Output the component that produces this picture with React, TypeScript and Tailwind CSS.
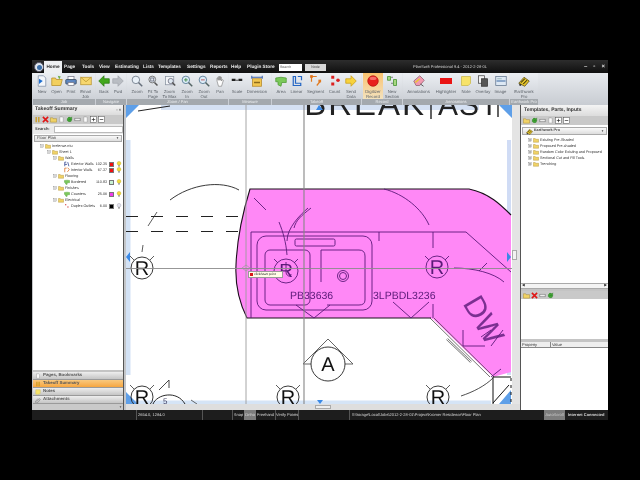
import React from "react";

const icons: Record<string, React.ReactNode> = {
  doc: (<><path d="M3 1h7l3 3v11H3z" fill="#f4f7fb" stroke="#7d8ea5" /><path d="M4 5l5 3-5 4z" fill="#1f6fd0" /></>),
  folder: (<><path d="M1 4h5l1 2h8l-2 8H1z" fill="#f2cf5e" stroke="#b58f26" /><path d="M9 1l4 1-2 4z" fill="#6fb04a" /></>),
  print: (<><rect x="4" y="2" width="8" height="5" fill="#fff" stroke="#778" /><rect x="1" y="6" width="14" height="6" rx="1" fill="#5d86c0" stroke="#345" /><rect x="4" y="10" width="8" height="4" fill="#fff" stroke="#778" /></>),
  mail: (<><rect x="1" y="3" width="14" height="10" fill="#f7d76f" stroke="#b9952f" /><path d="M1 3l7 6 7-6" fill="none" stroke="#b9952f" /></>),
  back: <path d="M1 8l7-7v4h7v6H8v4z" fill="#43a81d" stroke="#2a7a10" />,
  fwd: <path d="M15 8L8 1v4H1v6h7v4z" fill="#b9bdc3" stroke="#a3a7ad" />,
  zoom: (<><circle cx="6.5" cy="6.5" r="5" fill="#e9f1f8" stroke="#7b8794" strokeWidth="1.3" /><path d="M10 10l5 5" stroke="#66707c" strokeWidth="2" /></>),
  fit: (<><circle cx="7" cy="6" r="4.5" fill="#dfe8ef" stroke="#777" strokeWidth="1.3" /><path d="M10 10l4 4" stroke="#555" strokeWidth="2" /><rect x="5" y="4" width="4" height="4" fill="none" stroke="#667" /></>),
  max: (<><rect x="2" y="2" width="11" height="11" fill="#f3f5f8" stroke="#8892a0" /><circle cx="9" cy="8" r="3.5" fill="#dde7f0" stroke="#667" /><path d="M11 10l4 4" stroke="#555" strokeWidth="2" /></>),
  zin: (<><circle cx="6.5" cy="6.5" r="5" fill="#dcecf8" stroke="#64849c" strokeWidth="1.3" /><path d="M4 6.5h5M6.5 4v5" stroke="#2d7d2d" /><path d="M10 10l5 5" stroke="#566" strokeWidth="2" /></>),
  zout: (<><circle cx="6.5" cy="6.5" r="5" fill="#dcecf8" stroke="#64849c" strokeWidth="1.3" /><path d="M4 6.5h5" stroke="#b03030" /><path d="M10 10l5 5" stroke="#566" strokeWidth="2" /></>),
  hand: <path d="M4 8V4h1.5v3V2.5H7V7V2h1.5v5V3H10v5l1-2 1.5 1L10 15H6z" fill="#fdfdfd" stroke="#777" strokeWidth=".8" />,
  scale: (<><rect x="1" y="5" width="5" height="3" fill="#222" /><rect x="10" y="5" width="5" height="3" fill="#222" /><path d="M6 7h4" stroke="#222" /></>),
  dim: (<><rect x="2" y="5" width="12" height="10" fill="#f3c74f" stroke="#b3872a" /><rect x="4" y="9" width="8" height="2" fill="#8c6a1c" /><path d="M1 1v4M15 1v4M1 3h14" stroke="#2a55a8" strokeWidth="1.2" /></>),
  area: <path d="M1 4l7-1 7 1v6l-6 0-1 5-4-2V9H1z" fill="#7bc95a" stroke="#4e9a34" />,
  linear: <path d="M3 2h3v9h7v3H3zM9 2h5v5" fill="none" stroke="#2566c4" strokeWidth="1.6" />,
  segment: (<g fill="none" stroke="#e07a1f" strokeWidth="1.6"><path d="M2 2h7M2 2v7M14 8l-5 6" /><rect x="1" y="1" width="2" height="2" fill="#d33" /><rect x="12" y="7" width="2" height="2" fill="#d33" /></g>),
  count: (<g fill="#dc1f1f"><rect x="3" y="1" width="4" height="4" /><circle cx="12" cy="7" r="2.4" /><rect x="3" y="10" width="4" height="4" /></g>),
  send: <path d="M1 5h7V1l7 7-7 7v-4H1z" fill="#f7d23d" stroke="#c99d18" />,
  record: (<><circle cx="8" cy="8" r="7" fill="#e8201d" stroke="#b41612" /><ellipse cx="8" cy="4.5" rx="4.5" ry="2.3" fill="#f76d68" /></>),
  section: (<><path d="M2 2h4v5H2zM10 6h4v8h-4z" fill="#a6d77f" stroke="#3d8d2a" /><path d="M7 3h2M7 11h2" stroke="#333" /></>),
  annot: (<><path d="M1 8l8-7 6 6-6 7H4z" fill="#f29ab0" stroke="#8d6070" /><path d="M3 10l6-5" stroke="#e8c92e" strokeWidth="2" /><path d="M10 12l4 3" stroke="#333" /></>),
  high: <rect x="0" y="4" width="16" height="8" fill="#ea1414" />,
  note: <path d="M2 2h12v9l-3 3H2z" fill="#f7e36a" stroke="#c9b84a" />,
  overlay: (<><rect x="2" y="1" width="8" height="10" fill="#f4f4f4" stroke="#444" /><rect x="6" y="5" width="8" height="10" fill="#555" stroke="#333" /></>),
  image: (<><rect x="1" y="2" width="14" height="12" fill="#dde8f4" stroke="#60748c" /><path d="M2 8h12" stroke="#6f92bc" strokeWidth="2" /><path d="M3 5h6" stroke="#8aa" /></>),
  earth: (<><path d="M1 11l7-8 7 5-6 7z" fill="#e7c52b" stroke="#55480c" /><path d="M4 10l5-5M7 12l5-5" stroke="#33300c" strokeWidth="1.4" /><circle cx="3" cy="13" r="1.5" fill="#333" /></>),
  x: <path d="M2 2l12 12M14 2L2 14" stroke="#e01717" strokeWidth="3.6" />,
  pause: <path d="M5 2v12M11 2v12" stroke="#c99a1b" strokeWidth="3" />,
  sfolder: <path d="M1 4h5l1 2h8v8H1z" fill="#f0d266" stroke="#a2832a" />,
  refresh: <path d="M13 8a5 5 0 1 1-2-4l2-2v6H7l2-2" fill="#3fa534" stroke="#2b7d22" />,
  bar: <rect x="2" y="5" width="12" height="6" fill="#eee" stroke="#555" />,
  page: <path d="M4 2h6l2 2v10H4z" fill="#fafafa" stroke="#888" />,
  plus: (<><rect x="1.5" y="1.5" width="13" height="13" fill="#fff" stroke="#444" /><path d="M4 8h8M8 4v8" stroke="#222" strokeWidth="1.5" /></>),
  minus: (<><rect x="1.5" y="1.5" width="13" height="13" fill="#fff" stroke="#444" /><path d="M4 8h8" stroke="#222" strokeWidth="1.5" /></>),
  bulb: (<><circle cx="8" cy="6" r="5" fill="#f2dc3c" stroke="#b8a21a" /><rect x="6" y="11" width="4" height="4" fill="#888" /></>),
  bulbOff: (<><circle cx="8" cy="6" r="5" fill="#e5e5ee" stroke="#9a9aa8" /><rect x="6" y="11" width="4" height="4" fill="#888" /></>),
  tick: <path d="M2 14V3M2 3h4M2 9h6M10 3l3 11" stroke="#2a3f8c" strokeWidth="2" fill="none" />,
  orange: <path d="M2 14V3h5M10 2l4 5-5 6" stroke="#d9691c" strokeWidth="2" fill="none" />,
  red: <path d="M3 3h3v3H3zM9 9h3v3H9z" fill="#c81818" />,
  clip: <path d="M5 12l6-7a2 2 0 0 1 3 2l-7 8a3 3 0 0 1-5-4l6-7" fill="none" stroke="#666" strokeWidth="1.3" />,
};

function Icon({ k, s = 15 }: { k: string; s?: number }) {
  return (
    <svg width={s} height={s} viewBox="0 0 16 16" className="shrink-0">
      {icons[k]}
    </svg>
  );
}

function Btn({ w, k, l, active }: { w: string; k: string; l: React.ReactNode; active?: boolean }) {
  return (
    <div className={`${w} flex flex-col items-center pt-[2px] h-full ${active ? "bg-gradient-to-b from-[#f9c26e] to-[#f3e2bd]" : ""}`}>
      <Icon k={k} s={12} />
      <div className="mt-[2px] text-center text-[4.300px] leading-[5px] text-[#5c6269] whitespace-nowrap">{l}</div>
    </div>
  );
}

function Group({ w, label, pl, children }: { w: string; label: string; pl: string; children: React.ReactNode }) {
  return (
    <div className={`${w} shrink-0 flex flex-col h-full mr-[1px]`}>
      <div className={`flex flex-1 min-h-0 ${pl} bg-gradient-to-b from-[#eceff3] to-[#cdd1d7]`}>{children}</div>
      <div className="h-[6px] bg-[#a4a9ae] text-center text-[4px] leading-[6px] text-[#eceef0] whitespace-nowrap overflow-hidden">{label}</div>
    </div>
  );
}

function Tree({ pl, k, t, v, c, off, exp }: { pl: string; k: string; t: string; v?: string; c?: string; off?: boolean; exp?: string }) {
  return (
    <div className={`flex items-center h-[6px] ${pl} text-[3.700px] leading-[6px] text-[#333]`}>
      {exp && <span className="mr-[1px]"><Icon k={exp} s={4} /></span>}
      <Icon k={k} s={6} />
      <span className="ml-[1px] whitespace-nowrap">{t}</span>
      {v && (
        <>
          <span className="ml-auto">{v}</span>
          <span className={`ml-[2px] w-[5px] h-[5px] border border-[#777] ${c}`} />
          <span className="ml-[2px] mr-[1px]"><Icon k={off ? "bulbOff" : "bulb"} s={6} /></span>
        </>
      )}
    </div>
  );
}

function SideTab({ k, t, on }: { k: string; t: string; on?: boolean }) {
  return (
    <div className={`h-[8px] flex items-center pl-[2px] gap-[2px] border-b border-[#9a9a9a] text-[4.400px] font-bold text-[#555] ${on ? "bg-gradient-to-b from-[#f9c97e] to-[#f6a63e]" : "bg-gradient-to-b from-[#eeeeee] to-[#c5c5c5]"}`}>
      <Icon k={k} s={6} />
      {t}
    </div>
  );
}

function Rsym({ x, y }: { x: number; y: number }) {
  return (
    <g>
      <circle cx={x} cy={y} r={11} fill="none" stroke="#222" strokeWidth="0.9" />
      <path d={`M${x - 12} ${y - 12}l4 4M${x + 12} ${y - 12}l-4 4`} stroke="#333" strokeWidth="0.8" />
      <text x={x} y={y + 7} textAnchor="middle" fontSize="20" fontFamily="Liberation Sans" fill="#111">R</text>
    </g>
  );
}

function Drawing() {
  const purple = "#5b1a78";
  return (
    <svg viewBox="125 105 386 299" className="w-[386px] h-full block bg-white">
      <rect x="160" y="105" width="318" height="5" fill="#d5e1f3" />
      <rect x="125" y="140" width="4.5" height="235" fill="#d3e2f5" />
      <rect x="506" y="140" width="4" height="235" fill="#d0dcf5" />
      <rect x="130" y="400.5" width="360" height="3.5" fill="#d5e4f6" />
      <text x="425" y="115" textAnchor="end" fontSize="33" fontFamily="Liberation Sans" fill="#222" letterSpacing="2">BREAK</text>
      <text x="437" y="115" fontSize="30" fontFamily="Liberation Sans" fill="#222" letterSpacing="1">AST</text>
      <path d="M430 105V119M497 105V117" stroke="#111" strokeWidth="1.300" />
      <path d="M125 105h13l-13 13zM498 105h13v13zM125 392l12 12h-12zM498 404l12-14v14z" fill="#5e9fe8" />

      <path d="M137 111l32-5" stroke="#222" fill="none" />
      <path d="M169 200C190 184 220 180 238 190" fill="none" stroke="#222" strokeWidth="0.9" />
      <path d="M125 216.500H238M125 231.500H238" stroke="#222" strokeWidth="1" strokeDasharray="12 13" />
      <path d="M147 226l9-14M141 252l1-7" stroke="#333" strokeWidth="0.8" />

      <path d="M249 189H468C488 193 500 205 510 215V372L492 377L430 318H246C238 302 234 285 235 265C236 240 240 218 249 189Z" fill="#ff88f6" />
      <path d="M510 215C500 205 488 193 468 189H249C240 218 236 240 235 265C234 285 238 302 246 318H430" fill="none" stroke="#1a101a" strokeWidth="1.1" />
      <path d="M431 320L491 378" fill="none" stroke="#fff" strokeWidth="3" />
      <path d="M429 318L489 377M433 318L493 377" fill="none" stroke="#333" strokeWidth="0.7" />
      <path d="M446 339l24 23" fill="none" stroke="#777" strokeWidth="2.400" />
      <path d="M446 339l24 23" fill="none" stroke="#fff" strokeWidth="1" />

      <g fill="none" stroke={purple} strokeWidth="0.9">
        <path d="M250 232H465L510 272" />
        <path d="M250 232V318" />
        <rect x="256" y="236" width="115" height="74" rx="9" />
        <rect x="264" y="250" width="45" height="55" rx="5" />
        <path d="M320 282V250H358Q364 250 364 256V300Q364 305 358 305H326" />
        <rect x="294" y="239" width="40" height="7" rx="1.500" />
        <circle cx="342" cy="276" r="5.500" />
        <circle cx="342" cy="276" r="3.500" />
        <path d="M278 222c4 10 7 20 8 33M307 208c-8 7-21 20-21 33M310 208c-10 8-15 12-17 20" />
        <path d="M253 198l12 12" />
        <path d="M378 232v9M432 232v16" />
        <path d="M383 189c20 5 38 20 45 36" />
        <path d="M295 305l18 13 16-13M392 302l18 16 18-16M432 318v-14" />
        <path d="M486 263l-8 8M462 330v16h22M480 337l10-7M490 346l12-16M490 377l10-8" />
        <circle cx="285" cy="271" r="12" />
        <circle cx="436" cy="267" r="11" />
        <path d="M273 259l4 4M297 259l-4 4M424 256l4 4M448 256l-4 4" />
        <path d="M453 268c20 0 40 5 50 14" />
        <path d="M285 262v10c0 4 5 6 5 2" />
      </g>
      <text x="285" y="277" textAnchor="middle" fontSize="19" fontFamily="Liberation Sans" fill={purple}>R</text>
      <text x="436" y="274" textAnchor="middle" fontSize="20" fontFamily="Liberation Sans" fill={purple}>R</text>
      <text x="289" y="299" fontSize="10.500" fontFamily="Liberation Sans" fill={purple}>PB33636</text>
      <text x="372" y="299" fontSize="10.500" fontFamily="Liberation Sans" fill={purple}>3LPBDL3236</text>
      <text x="462" y="322" fontSize="30" fontFamily="Liberation Sans" fill={purple} opacity="0.8" transform="rotate(60 478 312)">DW</text>

      <path d="M492 377V404M492 377H510M492 403l16-18" fill="none" stroke="#111" strokeWidth="1" />
      <path d="M510 378v26" stroke="#111" strokeWidth="1" strokeDasharray="3 4" />
      <path d="M460 396C472 392 484 386 492 378" fill="none" stroke="#222" strokeWidth="0.8" />

      <Rsym x={141} y={268} />
      <Rsym x={141} y={397} />
      <Rsym x={287} y={397} />
      <Rsym x={437} y={397} />
      <path d="M158 390l10-10 v8" fill="none" stroke="#333" strokeWidth="0.9" />
      <path d="M152 404c4-10 24-14 32 0" fill="none" stroke="#111" strokeWidth="0.9" />
      <path d="M190 400l6 4" fill="none" stroke="#444" strokeWidth="0.8" />
      <text x="162" y="404" fontSize="8" fill="#446" fontFamily="Liberation Sans">5</text>

      <path d="M302 364l25-25 25 25h-9M302 364h9" fill="none" stroke="#555" strokeWidth="0.9" />
      <circle cx="327" cy="364" r="17" fill="#fff" stroke="#222" strokeWidth="0.9" />
      <text x="327" y="371" textAnchor="middle" fontSize="20" fontFamily="Liberation Sans" fill="#111">A</text>

      <path d="M245 105V404" stroke="#9c9c9c" strokeWidth="0.9" />
      <path d="M303 105V404" stroke="#868686" strokeWidth="1.100" />
      <path d="M125 268.500H511" stroke="#8b8b8b" strokeWidth="0.9" />

      <path d="M129 252v10l-4-5zM506 252v10l4-5zM318 105l-3 5h7zM316 400h6l-3 4z" fill="#3a89e6" />
      <path d="M241 268l4-3 4 3-4 3z" fill="none" stroke="#999" strokeWidth="0.7" />
    </svg>
  );
}

export default function App() {
  return (
    <div className="w-[640px] h-[480px] bg-black pt-[60px] pl-[32px] overflow-hidden blur-[0.35px] [text-rendering:geometricPrecision] [font-family:'Liberation_Sans',Arial,sans-serif]">
      <div className="w-[576px] h-[360px] flex flex-col bg-[#c4c6c9]">
        {/* Menu row */}
        <div className="h-[13px] shrink-0 bg-gradient-to-b from-[#2d2d2d] to-[#101010] flex items-end text-[4.700px] leading-[10px] font-bold text-[#e6e6e6]">
          <div className="w-[10px] h-[10px] ml-[2px] mb-[1px] rounded-full bg-[#dfe6ee] border border-[#556] flex items-center justify-center shrink-0">
            <div className="w-[5px] h-[5px] rounded-full bg-[#3b6ea8]" />
          </div>
          <div className="w-[18px] h-[12px] bg-[#eef0f2] text-[#333] text-center leading-[12px]">Home</div>
          <div className="flex h-[12px] items-center pl-[2px]">
            <span className="w-[18px]">Page</span>
            <span className="w-[17px]">Tools</span>
            <span className="w-[16px]">View</span>
            <span className="w-[28px]">Estimating</span>
            <span className="w-[15px]">Lists</span>
            <span className="w-[29px]">Templates</span>
            <span className="w-[23px]">Settings</span>
            <span className="w-[21px]">Reports</span>
            <span className="w-[16px]">Help</span>
            <span className="w-[32px] whitespace-nowrap">Plugin Store</span>
            <span className="w-[23px] h-[7px] bg-white text-[#555] text-[3.500px] leading-[7px] font-normal pl-[1px]">Search</span>
            <span className="ml-[3px] w-[21px] h-[7px] bg-[#d8d8d8] text-[#444] text-[3.500px] leading-[7px] text-center font-normal">Node</span>
          </div>
          <div className="ml-[87px] h-[12px] flex items-center font-normal text-[4px] text-[#cfcfcf] whitespace-nowrap">PlanSwift Professional 9.4 - 2012-2-28-0L</div>
          <div className="ml-auto mr-[3px] h-[12px] flex items-center gap-[6px] text-[6px] text-[#ddd]">
            <span>–</span><span>▫</span><span>×</span>
          </div>
        </div>

        {/* Ribbon */}
        <div className="h-[32px] shrink-0 flex pl-[1px] bg-gradient-to-b from-[#e7eaee] to-[#c8ccd2]">
          <Group w="w-[62px]" label="Job" pl="pl-[2px]">
            <Btn w="w-[14px]" k="doc" l="New" />
            <Btn w="w-[15px]" k="folder" l="Open" />
            <Btn w="w-[14px]" k="print" l="Print" />
            <Btn w="w-[15px]" k="mail" l={<>Email<br />Job</>} />
          </Group>
          <Group w="w-[30px]" label="Navigate" pl="pl-[1px]">
            <Btn w="w-[14px]" k="back" l="Back" />
            <Btn w="w-[14px]" k="fwd" l="Fwd" />
          </Group>
          <Group w="w-[101px]" label="Zoom / Pan" pl="pl-[2px]">
            <Btn w="w-[16px]" k="zoom" l="Zoom" />
            <Btn w="w-[16px]" k="fit" l={<>Fit To<br />Page</>} />
            <Btn w="w-[17px]" k="max" l={<>Zoom<br />To Max</>} />
            <Btn w="w-[18px]" k="zin" l={<>Zoom<br />In</>} />
            <Btn w="w-[16px]" k="zout" l={<>Zoom<br />Out</>} />
            <Btn w="w-[16px]" k="hand" l="Pan" />
          </Group>
          <Group w="w-[42px]" label="Measure" pl="pl-0">
            <Btn w="w-[16px]" k="scale" l="Scale" />
            <Btn w="w-[24px]" k="dim" l="Dimension" />
          </Group>
          <Group w="w-[89px]" label="Takeoff" pl="pl-[1px]">
            <Btn w="w-[16px]" k="area" l="Area" />
            <Btn w="w-[15px]" k="linear" l="Linear" />
            <Btn w="w-[23px]" k="segment" l="Segment" />
            <Btn w="w-[15px]" k="count" l="Count" />
            <Btn w="w-[18px]" k="send" l={<>Send<br />Data</>} />
          </Group>
          <Group w="w-[40px]" label="Record" pl="pl-[1px]">
            <Btn w="w-[20px]" k="record" active l={<>Digitizer<br />Record</>} />
            <Btn w="w-[18px]" k="section" l={<>New<br />Section</>} />
          </Group>
          <Group w="w-[106px]" label="Annotations" pl="pl-[4px]">
            <Btn w="w-[23px]" k="annot" l="Annotations" />
            <Btn w="w-[24px] ml-[4px]" k="high" l="Highlighter" />
            <Btn w="w-[16px]" k="note" l="Note" />
            <Btn w="w-[18px]" k="overlay" l="Overlay" />
            <Btn w="w-[17px]" k="image" l="Image" />
          </Group>
          <Group w="w-[28px]" label="Earthwork Pro" pl="pl-0">
            <Btn w="w-[28px]" k="earth" l={<>Earthwork<br />Pro</>} />
          </Group>
        </div>

        {/* Body */}
        <div className="flex-1 min-h-0 flex">
          {/* Left */}
          <div className="w-[91px] shrink-0 ml-[1px] flex flex-col bg-white border-r border-[#555]">
            <div className="h-[10px] bg-gradient-to-b from-[#f4f4f4] to-[#dcdcdc] flex items-center justify-between px-[2px] text-[5.100px] font-bold text-[#333]">
              <span>Takeoff Summary</span><span className="text-[4px] text-[#666]">▫ ×</span>
            </div>
            <div className="h-[9px] bg-[#c9c9c9] flex items-center gap-[1px] pl-[1px]">
              <Icon k="pause" s={7} /><Icon k="x" s={7} /><Icon k="sfolder" s={7} /><Icon k="page" s={7} /><Icon k="refresh" s={7} /><Icon k="bar" s={7} /><Icon k="page" s={7} /><Icon k="plus" s={7} /><Icon k="minus" s={7} />
            </div>
            <div className="h-[10px] bg-[#ebebeb] flex items-center pl-[2px] text-[4px] font-bold text-[#444]">
              Search:<span className="ml-[4px] w-[71px] h-[7px] bg-white border border-[#bbb]" />
            </div>
            <div className="h-[7px] mt-[1px] mb-[1px] mx-[1px] bg-gradient-to-b from-[#fafafa] to-[#dddddd] border border-[#aaa] flex items-center justify-between px-[2px] text-[4.200px] text-[#444]">
              <span>Floor Plan</span><span className="text-[3px]">▼</span>
            </div>
            <div className="flex-1 min-h-0">
              <Tree pl="pl-[7px]" k="sfolder" exp="minus" t="Irrelense.ntu" />
              <Tree pl="pl-[14px]" k="sfolder" exp="minus" t="Sheet 1" />
              <Tree pl="pl-[20px]" k="sfolder" exp="minus" t="Walls" />
              <Tree pl="pl-[31px]" k="tick" t="Exterior Walls" v="102.35" c="bg-[#f01010]" />
              <Tree pl="pl-[31px]" k="orange" t="Interior Walls" v="67.37" c="bg-[#f01010]" />
              <Tree pl="pl-[20px]" k="sfolder" exp="minus" t="Flooring" />
              <Tree pl="pl-[31px]" k="area" t="Bordered" v="110.83" c="bg-[#c9f2d4]" />
              <Tree pl="pl-[20px]" k="sfolder" exp="minus" t="Finishes" />
              <Tree pl="pl-[31px]" k="area" t="Counters" v="25.06" c="bg-[#f23bea]" />
              <Tree pl="pl-[20px]" k="sfolder" exp="minus" t="Electrical" />
              <Tree pl="pl-[31px]" k="red" t="Duplex Outlets" v="6.00" c="bg-black" off />
            </div>
            <div className="h-[2px] bg-[#c4c4c4]" />
            <SideTab k="page" t="Pages, Bookmarks" />
            <SideTab k="pause" t="Takeoff Summary" on />
            <SideTab k="note" t="Notes" />
            <SideTab k="clip" t="Attachments" />
            <div className="h-[6px] bg-[#c9c9c9] text-right pr-[1px] text-[3px] leading-[6px] text-[#555]">▼</div>
          </div>

          {/* Center */}
          <div className="w-[394px] shrink-0 ml-[2px] flex flex-col">
            <div className="flex-1 min-h-0 flex">
              <div className="relative h-full w-[386px] shrink-0">
                <Drawing />
                <div className="absolute left-[122px] top-[166px] w-[35px] h-[7px] bg-[#fffbe6] border border-[#999] flex items-center gap-[1px] pl-[1px] text-[3.300px] text-[#333] whitespace-nowrap">
                  <span className="w-[3px] h-[3px] bg-[#d81818] shrink-0" />click/start point
                </div>
              </div>
              <div className="flex-1 bg-[#e4e4e4] flex items-center">
                <div className="w-[5px] h-[10px] bg-[#f2f2f2] border border-[#aaa]" />
              </div>
            </div>
            <div className="h-[6px] bg-[#dedede] flex items-center justify-center">
              <div className="w-[16px] h-[4px] bg-[#eee] border border-[#aaa]" />
            </div>
          </div>

          {/* Right */}
          <div className="flex-1 min-w-0 flex flex-col bg-white border-l border-[#555]">
            <div className="h-[11px] bg-gradient-to-b from-[#f4f4f4] to-[#dcdcdc] flex items-center pl-[3px] text-[5px] font-bold text-[#333] whitespace-nowrap">Templates, Parts, Inputs</div>
            <div className="h-[9px] bg-[#c9c9c9] flex items-center gap-[1px] pl-[2px]">
              <Icon k="sfolder" s={7} /><Icon k="refresh" s={7} /><Icon k="bar" s={7} /><Icon k="page" s={7} /><Icon k="plus" s={7} /><Icon k="minus" s={7} />
            </div>
            <div className="h-[8px] mt-[2px] mb-[2px] mx-[1px] bg-gradient-to-b from-[#fafafa] to-[#dddddd] border border-[#aaa] flex items-center justify-between pl-[3px] pr-[2px] text-[3.800px] font-bold text-[#444]">
              <span className="flex items-center gap-[1px]"><Icon k="earth" s={7} />Earthwork Pro</span><span className="text-[3px]">▼</span>
            </div>
            <div className="h-[146px]">
              <Tree pl="pl-[7px]" k="sfolder" exp="plus" t="Existing Pre-Shaded" />
              <Tree pl="pl-[7px]" k="sfolder" exp="plus" t="Proposed Pre-shaded" />
              <Tree pl="pl-[7px]" k="sfolder" exp="plus" t="Random Color Existing and Proposed" />
              <Tree pl="pl-[7px]" k="sfolder" exp="plus" t="Sectional Cut and Fill Tools" />
              <Tree pl="pl-[7px]" k="sfolder" exp="plus" t="Trenching" />
            </div>
            <div className="h-[6px] bg-[#f4f4f4] flex items-center justify-between px-[1px] border-y border-[#aaa] text-[3.500px] text-[#222]">
              <span>◀</span><span>▶</span>
            </div>
            <div className="h-[2px] bg-[#c4c4c4]" />
            <div className="h-[8px] bg-[#c9c9c9] flex items-center gap-[1px] pl-[2px]">
              <Icon k="sfolder" s={7} /><Icon k="x" s={7} /><Icon k="bar" s={7} /><Icon k="refresh" s={7} />
            </div>
            <div className="h-[40px]" />
            <div className="h-[3px] bg-[#c4c4c4]" />
            <div className="h-[6px] bg-[#eeeeee] flex border-b border-[#888] text-[4px] leading-[5px] text-[#333]">
              <span className="w-[30px] pl-[1px] border-r border-[#888]">Property</span>
              <span className="pl-[1px]">Value</span>
            </div>
            <div className="flex-1" />
          </div>
        </div>

        {/* Status bar */}
        <div className="h-[10px] shrink-0 bg-[#1d1d1d] flex items-center text-[4px] text-[#d8d8d8] whitespace-nowrap">
          <span className="w-[105px] shrink-0 h-full border-r border-[#555]" />
          <span className="w-[66px] shrink-0 h-full leading-[10px] pl-[1px] border-r border-[#555]">2654.0, 1284.0</span>
          <span className="w-[30px] shrink-0 h-full border-r border-[#555]" />
          <span className="w-[11px] shrink-0 h-full leading-[10px] text-center">Snap</span>
          <span className="w-[12px] shrink-0 h-full leading-[10px] text-center bg-[#7d7d7d]">Ortho</span>
          <span className="w-[20px] shrink-0 h-full leading-[10px] text-center border-r border-[#555]">Freehand</span>
          <span className="w-[23px] shrink-0 h-full leading-[10px] text-center border-r border-[#555]">Verify Points</span>
          <span className="w-[51px] shrink-0 h-full border-r border-[#555]" />
          <span className="w-[194px] shrink-0 h-full leading-[10px] pl-[2px] overflow-hidden">\\Storage\Local\Jobs\2012-2-28-01\Project\Kromer Residence\Floor Plan</span>
          <span className="w-[21px] shrink-0 h-full leading-[10px] text-center bg-[#7d7d7d] text-[#ccc]">AutoScroll</span>
          <span className="ml-[3px] leading-[10px] font-bold">Internet Connected</span>
        </div>
      </div>
    </div>
  );
}
